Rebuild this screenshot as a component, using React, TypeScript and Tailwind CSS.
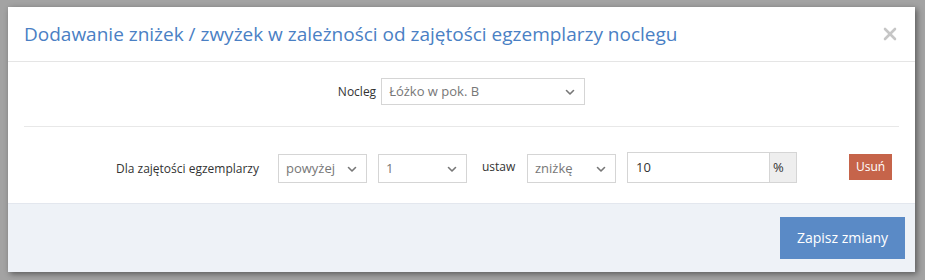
import type { FC } from "react";

// --- 아이콘 ---
const ChevronDown: FC<{ className?: string }> = ({ className = "w-3 h-3" }) => (
  <svg className={className} viewBox="0 0 12 12" fill="none" stroke="currentColor" strokeWidth="1.6" strokeLinecap="round" strokeLinejoin="round">
    <polyline points="2.5,4.5 6,8 9.5,4.5" />
  </svg>
);

const CloseIcon: FC<{ className?: string }> = ({ className = "w-4 h-4" }) => (
  <svg className={className} viewBox="0 0 14 14" fill="none" stroke="currentColor" strokeWidth="2.6" strokeLinecap="round">
    <line x1="2" y1="2" x2="12" y2="12" />
    <line x1="12" y1="2" x2="2" y2="12" />
  </svg>
);

const FakeSelect: FC<{ value: string; className?: string }> = ({ value, className = "" }) => (
  <div className={`flex items-center justify-between border border-[#d5d5d5] bg-white pl-[7px] pr-[8px] ${className}`}>
    <span className="text-[13px] text-[#777]">{value}</span>
    <ChevronDown className="w-[12px] h-[12px] text-[#777]" />
  </div>
);

export default function App() {
  return (
    <div
      className="w-[925px] h-[280px] bg-[#a3a3a3] pt-[7px] pl-[8px] overflow-hidden"
      style={{ fontFamily: '"Open Sans", "Liberation Sans", sans-serif' }}
    >
      <div className="w-[907px] h-[265px] bg-white flex flex-col shadow-[2px_2px_6px_rgba(0,0,0,0.45)]">
        {/* 헤더 */}
        <div className="h-[55px] flex items-center justify-between pl-[16px] pr-[18px] border-b border-[#e5e5e5] shrink-0">
          <h3 className="text-[19px] text-[#4a80c4]">
            Dodawanie zniżek / zwyżek w zależności od zajętości egzemplarzy noclegu
          </h3>
          <CloseIcon className="w-[14px] h-[14px] text-[#c6c6c6] mt-[-1px]" />
        </div>

        {/* 본문 */}
        <div className="flex-1 px-[16px] bg-white">
          <div className="flex items-start justify-center h-[65px] pt-[16px] border-b border-[#e8e8e8]">
            <span className="text-[12px] text-[#333] mr-[5px] h-[27px] flex items-center">Nocleg</span>
            <FakeSelect value="Łóżko w pok. B" className="w-[204px] h-[27px]" />
          </div>
          <div className="flex items-start h-[75px] pt-[27px]">
            <span className="text-[12px] text-[#333] ml-[92px] w-[162px] h-[29px] flex items-center">
              Dla zajętości egzemplarzy
            </span>
            <FakeSelect value="powyżej" className="w-[89px] h-[29px]" />
            <FakeSelect value="1" className="w-[89px] h-[29px] ml-[11px]" />
            <span className="text-[12px] text-[#333] ml-[15px] w-[45px] h-[25px] flex items-center">ustaw</span>
            <FakeSelect value="zniżkę" className="w-[89px] h-[29px]" />
            <div className="flex h-[31px] ml-[11px] mt-[-2px]">
              <div className="w-[143px] border border-[#d5d5d5] flex items-center pl-[8px] text-[13px] text-[#333]">10</div>
              <div className="w-[27px] border border-l-0 border-[#d5d5d5] bg-[#eeeeee] flex items-center pl-[3px] text-[13px] text-[#333]">%</div>
            </div>
            <button className="ml-[52px] h-[26px] px-[7px] bg-[#c6644a] text-white text-[12px]">Usuń</button>
          </div>
        </div>

        {/* 푸터 */}
        <div className="h-[69px] bg-[#eef2f7] border-t border-[#e3e7ee] flex items-center justify-end pr-[10px] shrink-0">
          <button className="w-[125px] h-[42px] bg-[#5a8ac6] text-white text-[14px] mt-[-1px]">Zapisz zmiany</button>
        </div>
      </div>
    </div>
  );
}
